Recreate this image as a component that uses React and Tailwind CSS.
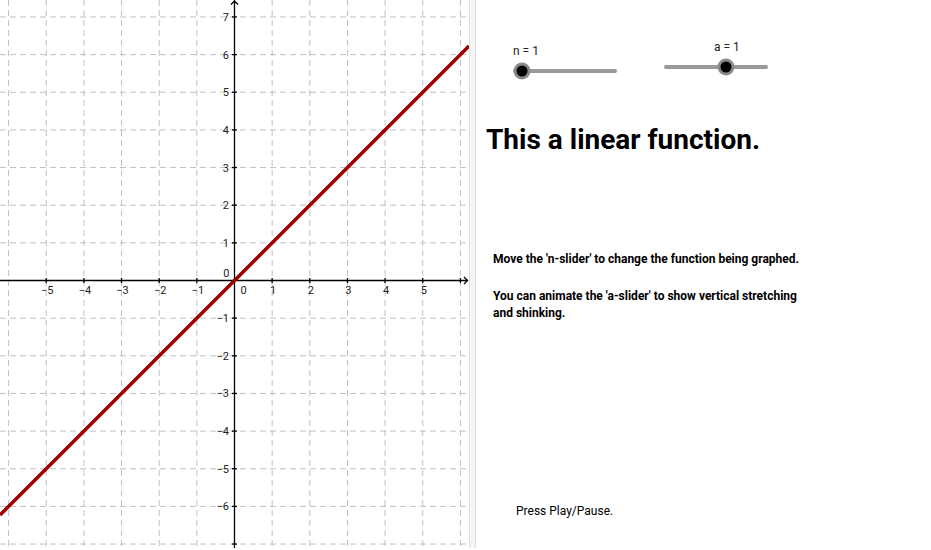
import React from "react";

const OX = 234.5;
const OY = 280.5;
const U = 37.65;
const W = 469;
const H = 548;

const range = (a, b) => Array.from({ length: b - a + 1 }, (_, i) => a + i);

const Graph = () => {
  const xs = range(-6, 6);
  const ys = range(-7, 7);
  return (
    <svg width={W} height={H} className="block">
      {/* grid */}
      <g stroke="#c0c0c0" strokeWidth="1" strokeDasharray="6 4">
        {xs.map((k) => (
          <line key={"vx" + k} x1={OX + k * U} y1={0} x2={OX + k * U} y2={H} />
        ))}
        {ys.map((k) => (
          <line key={"hy" + k} x1={0} y1={OY - k * U} x2={W} y2={OY - k * U} />
        ))}
      </g>

      {/* axes */}
      <g stroke="#000" strokeWidth="1.3" fill="none">
        <line x1={0} y1={OY} x2={W - 1} y2={OY} />
        <line x1={OX} y1={H} x2={OX} y2={0.5} />
        <polyline points={`${W - 5},${OY - 3.5} ${W - 1.5},${OY} ${W - 5},${OY + 3.5}`} />
        <polyline points={`${OX - 3.5},${4.5} ${OX},${1} ${OX + 3.5},${4.5}`} />
        {xs.filter((k) => k !== 0 && k > -6).map((k) => (
          <line key={"tx" + k} x1={OX + k * U} y1={OY - 2.5} x2={OX + k * U} y2={OY + 2.5} />
        ))}
        {ys.filter((k) => k !== 0).map((k) => (
          <line key={"ty" + k} x1={OX - 2.5} y1={OY - k * U} x2={OX + 2.5} y2={OY - k * U} />
        ))}
      </g>

      {/* labels */}
      <g fill="#222" fontSize="11" fontFamily="Roboto, 'DejaVu Sans', sans-serif">
        {range(-5, 5)
          .filter((k) => k !== 0)
          .map((k) => (
            <text key={"lx" + k} x={OX + k * U + 1} y={OY + 13.5} textAnchor="middle">
              {k < 0 ? "\u2212" + -k : k}
            </text>
          ))}
        <text x={OX + 9} y={OY + 13.5} textAnchor="middle">0</text>
        <text x={OX - 5} y={OY - 4} textAnchor="end">0</text>
        {ys
          .filter((k) => k !== 0 && k > -7)
          .map((k) => (
            <text key={"ly" + k} x={OX - 5.5} y={OY - k * U + 4} textAnchor="end">
              {k < 0 ? "\u2212" + -k : k}
            </text>
          ))}
      </g>

      {/* f(x) = x */}
      <line
        x1={0}
        y1={OY + OX}
        x2={W}
        y2={OY - (W - OX)}
        stroke="#990000"
        strokeWidth="3.5"
      />
    </svg>
  );
};

const Slider = ({ label, labelOffset, thumb, className }) => (
  <div className={`w-[104px] ${className}`}>
    <div
      className="text-[12px] leading-[16px] text-[#222] whitespace-nowrap"
      style={{ paddingLeft: labelOffset }}
    >
      {label}
    </div>
    <div className="relative mt-[10px] h-[4px] rounded-full bg-[#999]">
      <div
        className="absolute top-1/2 w-[17px] h-[17px] -translate-x-1/2 -translate-y-1/2 rounded-full bg-black border-[3px] border-[#8a8a8a]"
        style={{ left: thumb }}
      />
    </div>
  </div>
);

export default function App() {
  return (
    <div
      className="flex w-[931px] h-[550px] bg-white overflow-hidden"
      style={{ fontFamily: "Roboto, 'Liberation Sans', sans-serif" }}
    >
      <div className="w-[469px] h-[548px] shrink-0">
        <Graph />
      </div>
      <div className="w-[7px] h-[548px] shrink-0 bg-[#f6f6f6] border-x border-[#dedede]" />

      <div className="flex-1 flex flex-col">
        <div className="flex items-start ml-[37px] gap-[47px]">
          <Slider label="n = 1" labelOffset={-3} thumb={9} className="mt-[43px]" />
          <Slider label="a = 1" labelOffset={50} thumb={62} className="mt-[39px]" />
        </div>

        <h1 className="ml-[10px] mt-[49px] text-[28px] leading-[36px] font-bold text-black">
          This a linear function.
        </h1>

        <div className="ml-[17px] mt-[93px] text-[12px] leading-[17px] font-bold text-black">
          <p>Move the 'n-slider' to change the function being graphed.</p>
          <p className="mt-[20px] w-[320px]">
            You can animate the 'a-slider' to show vertical stretching and shinking.
          </p>
        </div>

        <p className="ml-[40px] mt-[181px] text-[12px] leading-[17px] text-black">
          Press Play/Pause.
        </p>
      </div>
    </div>
  );
}
